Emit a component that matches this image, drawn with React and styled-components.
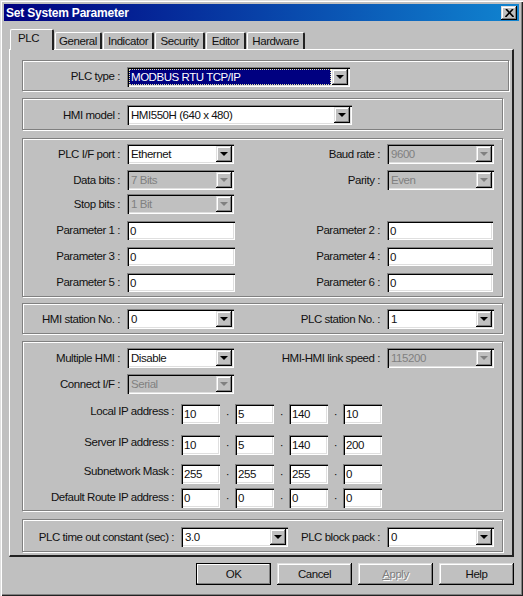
import React from "react";
import styled, { createGlobalStyle, css } from "styled-components";

const GlobalStyle = createGlobalStyle`
  html, body {
    margin: 0;
    padding: 0;
    background: #c0c0c0;
  }
`;

const sunken = css`
  box-shadow: inset 1px 1px #808080, inset 2px 2px #000, inset -1px -1px #fff, inset -2px -2px #dfdfdf;
`;

const raised = css`
  box-shadow: inset -1px -1px #000, inset 1px 1px #dfdfdf, inset -2px -2px #808080, inset 2px 2px #fff;
`;

const Window = styled.div`
  box-sizing: border-box;
  width: 523px;
  height: 596px;
  padding: 4px 4px 0;
  background: #c0c0c0;
  font: 11.5px "Liberation Sans", Arial, sans-serif;
  letter-spacing: -0.45px;
  color: #111;
  overflow: hidden;
  box-shadow: inset 1px 1px #dfdfdf, inset 2px 2px #fff, inset -1px -1px #222, inset -2px -2px #808080;
`;

const TitleBar = styled.div`
  display: flex;
  align-items: center;
  justify-content: space-between;
  height: 17px;
  padding: 0 2px;
  background: linear-gradient(90deg, #000080, #1084d0);
  color: #fff;
  font-size: 12px;
  font-weight: 700;
  letter-spacing: -0.2px;
`;

const CloseButton = styled.div`
  ${raised}
  display: flex;
  align-items: center;
  justify-content: center;
  width: 16px;
  height: 14px;
  background: #c0c0c0;
`;

const TabStrip = styled.div`
  display: flex;
  align-items: flex-end;
  height: 28px;
  padding-left: 6px;
`;

const Tab = styled.div`
  position: relative;
  box-sizing: border-box;
  width: ${(p) => p.$w}px;
  height: ${(p) => (p.$active ? 21 : 17)}px;
  margin: ${(p) => (p.$active ? "0 1px -1px 0" : "0 1px 0 0")};
  padding: 2px ${(p) => (p.$active ? 6 : 0)}px 0 0;
  text-align: center;
  background: #c0c0c0;
  border-radius: 2px 2px 0 0;
  border-top: 1px solid #fff;
  border-left: 1px solid #fff;
  border-right: 2px solid #222;
  z-index: ${(p) => (p.$active ? 1 : 0)};
`;

const Pane = styled.div`
  box-sizing: border-box;
  width: 505px;
  height: 508px;
  margin-left: 5px;
  padding: 10px 0 0 12px;
  border-top: 1px solid #fff;
  border-left: 1px solid #fff;
  border-right: 2px solid #222;
  border-bottom: 2px solid #222;
`;

const Group = styled.div`
  box-sizing: border-box;
  width: ${(p) => p.$w || 481}px;
  height: ${(p) => p.$h}px;
  margin-bottom: ${(p) => p.$mb ?? 7}px;
  padding-top: ${(p) => p.$pt}px;
  border: 1px solid #808080;
  box-shadow: inset 1px 1px #fff, 1px 1px #fff;
`;

const Row = styled.div`
  display: flex;
  align-items: center;
  margin-top: ${(p) => p.$mt || 0}px;
`;

const Label = styled.div`
  width: ${(p) => p.$w}px;
  margin-right: 7px;
  margin-bottom: ${(p) => p.$lift || 0}px;
  text-align: right;
  white-space: nowrap;
`;

const SelectBox = styled.div`
  ${sunken}
  box-sizing: border-box;
  display: flex;
  align-items: center;
  justify-content: space-between;
  width: ${(p) => p.$w || 107}px;
  height: 20px;
  padding: 2px;
  background: ${(p) => (p.$disabled ? "#c0c0c0" : "#fff")};
  color: ${(p) => (p.$disabled ? "#808080" : "#111")};
`;

const SelectValue = styled.div`
  flex: 1;
  align-self: stretch;
  display: flex;
  align-items: center;
  padding-left: 2px;
  margin-right: 1px;
  ${(p) =>
    p.$selected &&
    css`
      background: #000080;
      color: #fff;
      outline: 1px dotted #e0e0a0;
      outline-offset: -1px;
    `}
`;

const ArrowButton = styled.div`
  ${raised}
  display: flex;
  align-items: center;
  justify-content: center;
  width: 16px;
  height: 16px;
  background: #c0c0c0;

  &::after {
    content: "";
    border-style: solid;
    border-width: 4px 4px 0;
    border-color: ${(p) => (p.$disabled ? "#808080" : "#000")} transparent transparent;
  }
`;

const TextInput = styled.div`
  ${sunken}
  box-sizing: border-box;
  width: ${(p) => p.$w || 108}px;
  height: ${(p) => p.$h || 19}px;
  padding: 3px 0 0 3px;
  background: #fff;
  line-height: 14px;
`;

const Dot = styled.div`
  width: 15px;
  text-align: center;
`;

const ButtonRow = styled.div`
  display: flex;
  justify-content: flex-end;
  gap: 6px;
  margin-top: 6px;
  padding-right: 5px;
`;

const Button = styled.div`
  ${raised}
  ${(p) => p.$default && "outline: 1px solid #000; outline-offset: -1px;"}
  display: flex;
  align-items: center;
  justify-content: center;
  width: 75px;
  height: 22px;
  color: ${(p) => (p.$disabled ? "#808080" : "#111")};
  ${(p) => p.$disabled && "text-shadow: 1px 1px #fff;"}
`;

const Underlined = styled.span`
  text-decoration: underline;
`;

function Select({ value, w, disabled, selected }) {
  return (
    <SelectBox $w={w} $disabled={disabled}>
      <SelectValue $selected={selected}>{value}</SelectValue>
      <ArrowButton $disabled={disabled} />
    </SelectBox>
  );
}

function IpRow({ label, octets, mt, lift }) {
  return (
    <Row $mt={mt}>
      <Label $w={151} $lift={lift}>{label}</Label>
      {octets.map((o, i) => (
        <React.Fragment key={i}>
          {i > 0 && <Dot>·</Dot>}
          <TextInput $w={39} $h={20}>{o}</TextInput>
        </React.Fragment>
      ))}
    </Row>
  );
}

function ParamRow({ left, right }) {
  return (
    <Row $mt={7}>
      <Label $w={97} $lift={2}>{left}</Label>
      <TextInput>0</TextInput>
      <Label $w={145} $lift={2}>{right}</Label>
      <TextInput $w={106}>0</TextInput>
    </Row>
  );
}

export default function App() {
  return (
    <Window>
      <GlobalStyle />
      <TitleBar>
        Set System Parameter
        <CloseButton>
          <svg width="9" height="8" viewBox="0 0 9 8">
            <path d="M1 0l7.500 8M8 0L.5 8" stroke="#000" strokeWidth="1.600" fill="none" />
          </svg>
        </CloseButton>
      </TitleBar>
      <TabStrip>
        <Tab $w={44} $active>PLC</Tab>
        <Tab $w={47}>General</Tab>
        <Tab $w={51}>Indicator</Tab>
        <Tab $w={50}>Security</Tab>
        <Tab $w={40}>Editor</Tab>
        <Tab $w={58}>Hardware</Tab>
      </TabStrip>
      <Pane>
        <Group $w={487} $h={31} $pt={6}>
          <Row>
            <Label $w={97} $lift={2}>PLC type :</Label>
            <Select value="MODBUS RTU TCP/IP" w={223} selected />
          </Row>
        </Group>
        <Group $h={32} $pt={6} $mb={8}>
          <Row>
            <Label $w={97}>HMI model :</Label>
            <Select value="HMI550H (640 x 480)" w={225} />
          </Row>
        </Group>
        <Group $h={159} $pt={5} $mb={6}>
          <Row>
            <Label $w={97}>PLC I/F port :</Label>
            <Select value="Ethernet" />
            <Label $w={146}>Baud rate :</Label>
            <Select value="9600" disabled />
          </Row>
          <Row $mt={6}>
            <Label $w={97}>Data bits :</Label>
            <Select value="7 Bits" disabled />
            <Label $w={146}>Parity :</Label>
            <Select value="Even" disabled />
          </Row>
          <Row $mt={4}>
            <Label $w={97}>Stop bits :</Label>
            <Select value="1 Bit" disabled />
          </Row>
          <ParamRow left="Parameter 1 :" right="Parameter 2 :" />
          <ParamRow left="Parameter 3 :" right="Parameter 4 :" />
          <ParamRow left="Parameter 5 :" right="Parameter 6 :" />
        </Group>
        <Group $h={31} $pt={5}>
          <Row>
            <Label $w={97}>HMI station No. :</Label>
            <Select value="0" />
            <Label $w={146}>PLC station No. :</Label>
            <Select value="1" />
          </Row>
        </Group>
        <Group $h={170} $pt={6} $mb={8}>
          <Row>
            <Label $w={97}>Multiple HMI :</Label>
            <Select value="Disable" />
            <Label $w={146}>HMI-HMI link speed :</Label>
            <Select value="115200" disabled />
          </Row>
          <Row $mt={6}>
            <Label $w={97}>Connect I/F :</Label>
            <Select value="Serial" disabled />
          </Row>
          <IpRow label="Local IP address :" octets={[10, 5, 140, 10]} mt={10} lift={6} />
          <IpRow label="Server IP address :" octets={[10, 5, 140, 200]} mt={11} lift={6} />
          <IpRow label="Subnetwork Mask :" octets={[255, 255, 255, 0]} mt={9} lift={6} />
          <IpRow label="Default Route IP address :" octets={[0, 0, 0, 0]} mt={4} lift={2} />
        </Group>
        <Group $h={33} $pt={7} $mb={0}>
          <Row>
            <Label $w={151}>PLC time out constant (sec) :</Label>
            <Select value="3.0" />
            <Label $w={92}>PLC block pack :</Label>
            <Select value="0" />
          </Row>
        </Group>
      </Pane>
      <ButtonRow>
        <Button $default>OK</Button>
        <Button>Cancel</Button>
        <Button $disabled><Underlined>A</Underlined>pply</Button>
        <Button>Help</Button>
      </ButtonRow>
    </Window>
  );
}
